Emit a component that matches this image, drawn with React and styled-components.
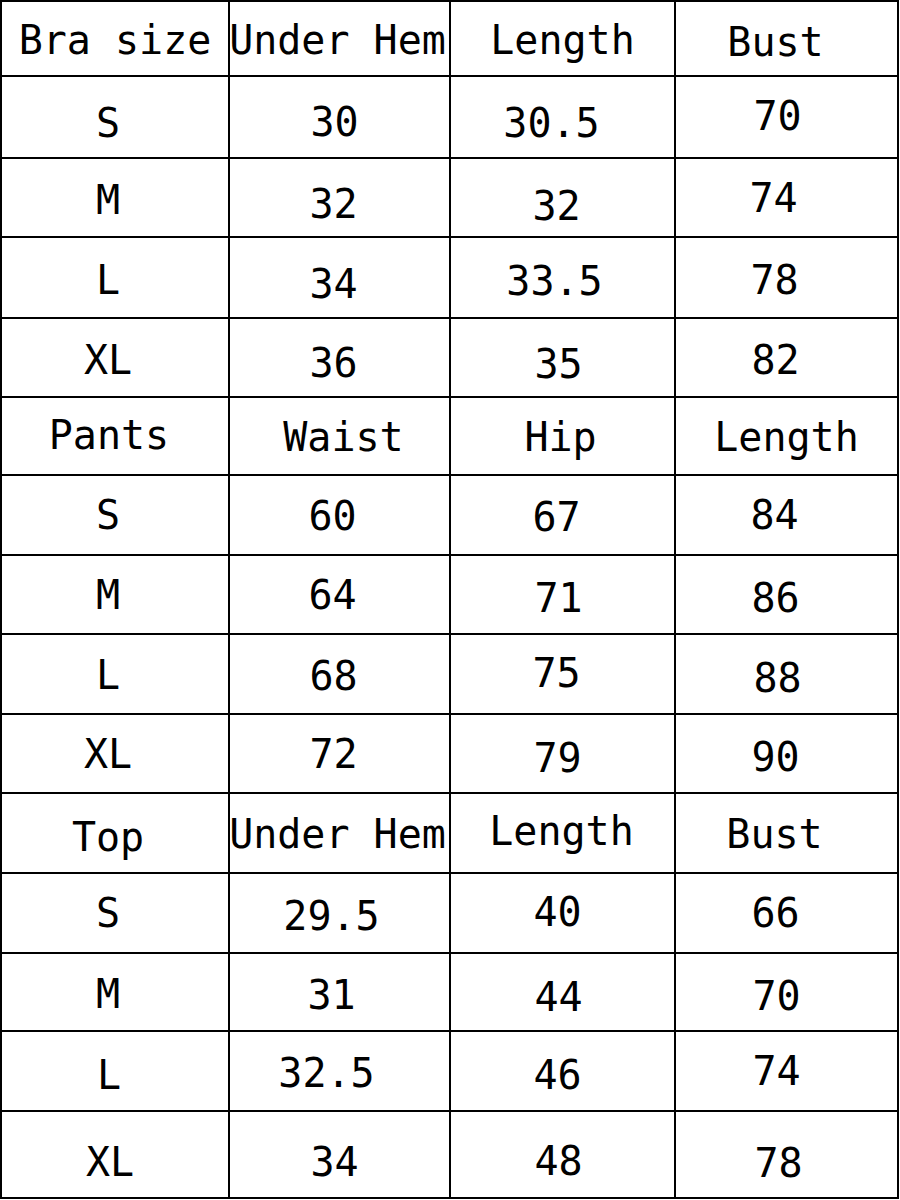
import React from "react";
import styled, { createGlobalStyle } from "styled-components";

const GlobalStyle = createGlobalStyle`
  html, body {
    margin: 0;
    padding: 0;
    background: #ffffff;
  }
`;

// row heights measured off the sheet, last row is a little taller
const ROW_HEIGHTS = [73, 80, 77, 79, 77, 76, 78, 77, 78, 77, 78, 78, 76, 78, 85];
const COL_SHIFT = [-7, -6, -6, -11];

const Sheet = styled.div`
  display: grid;
  grid-template-columns: 226px 219px 223px 221px;
  grid-template-rows: ${ROW_HEIGHTS.map((h) => `${h}px`).join(" ")};
  gap: 2px;
  width: 899px;
  box-sizing: border-box;
  padding: 2px;
  background: #000000;
  font-family: "DejaVu Sans Mono", "Liberation Mono", "Noto Sans CJK SC", monospace;
  font-size: 40px;
  color: #000000;
`;

const Cell = styled.div`
  display: flex;
  align-items: center;
  justify-content: center;
  background: #ffffff;
  white-space: pre;
  line-height: 1;
`;

const Label = styled.span`
  transform: translate(${(p) => p.$dx}px, ${(p) => p.$dy}px);
`;

// each cell: [text, dy, dx override]
const rows = [
  [["Bra size", 1, 0], ["Under Hem", 1, -2], ["Length", 1, 0], ["Bust", 3, -11]],
  [["S", 6], ["30", 5, -5], ["30.5", 6, -11], ["70", -1, -9]],
  [["M", 2], ["32", 6], ["32", 8], ["74", 0, -13]],
  [["L", 2], ["34", 6], ["33.5", 3, -8], ["78", 2, -12]],
  [["XL", 2], ["36", 5], ["35", 6, -4]],
  [["Pants", -1, -6], ["Waist", 1, 4], ["Hip", 1, -2], ["Length", 1, 0]],
  [["S", 0], ["60", 1, -7], ["67", 2], ["84", 0, -12]],
  [["M", 0], ["64", 0, -7], ["71", 3, -4], ["86", 3]],
  [["L", 1], ["68", 2], ["75", -1], ["88", 4, -9]],
  [["XL", 0], ["72", 0], ["79", 4, -5], ["90", 3]],
  [["Top", 4, -7], ["Under Hem", 1, -2], ["Length", -2, -1], ["Bust", 1, -12]],
  [["S", 0], ["29.5", 3, -8], ["40", -1, -5], ["66", 0]],
  [["M", 2], ["31", 3, -8], ["44", 5, -4], ["70", 4, -10]],
  [["L", 4, -6], ["32.5", 2, -13], ["46", 4, -5], ["74", 0, -10]],
  [["XL", 7, -5], ["34", 7, -5], ["48", 6, -4], ["78", 8, -8]],
];

// row 4 bust column
rows[4].push(["82", 2]);

const App = () => {
  return (
    <>
      <GlobalStyle />
      <Sheet>
        {rows.map((row, r) =>
          row.map(([text, dy, dx], c) => (
            <Cell key={`${r}-${c}`}>
              <Label $dx={dx ?? COL_SHIFT[c]} $dy={dy}>
                {text}
              </Label>
            </Cell>
          ))
        )}
      </Sheet>
    </>
  );
};

export default App;
